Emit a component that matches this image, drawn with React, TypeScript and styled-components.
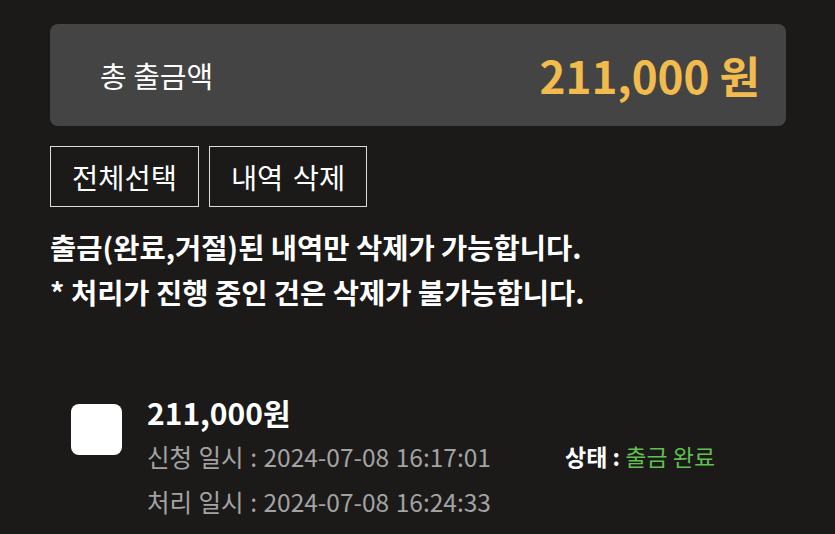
import React from "react";
import styled, { createGlobalStyle } from "styled-components";

const GlobalStyle = createGlobalStyle`
  html, body {
    margin: 0;
    padding: 0;
    background: #1b1a19;
  }
  body {
    font-family: "Noto Sans CJK KR", "Noto Sans", sans-serif;
    color: #ffffff;
  }
  * {
    box-sizing: border-box;
  }
`;

const Page = styled("div")`
  width: 835px;
  height: 534px;
  overflow: hidden;
  padding: 24px 49px 0 50px;
`;

const SummaryBox = styled("div")`
  height: 102px;
  border-radius: 8px;
  background: #444444;
  display: flex;
  align-items: center;
  justify-content: space-between;
  padding: 0 26px 0 50px;
`;

const SummaryLabel = styled("span")`
  font-size: 29px;
  font-weight: 400;
  line-height: 1;
`;

const SummaryAmount = styled("span")`
  font-size: 44px;
  font-weight: 700;
  color: #f2bb4d;
  line-height: 1;
`;

const ButtonRow = styled("div")`
  display: flex;
  gap: 10px;
  margin-top: 20px;
`;

const OutlineButton = styled("button")`
  height: 61px;
  padding: 0 21px;
  background: transparent;
  border: 1.5px solid #dcdcdc;
  border-radius: 0;
  color: #ffffff;
  font-family: inherit;
  font-size: 28.5px;
  font-weight: 400;
  word-spacing: 3px;
  cursor: pointer;
`;

const Notice = styled("p")`
  margin: 17px 0 0;
  font-size: 28.5px;
  font-weight: 700;
  line-height: 45px;
`;

const ItemList = styled("div")`
  margin-top: 76px;
`;

const Item = styled("div")`
  display: flex;
  align-items: flex-start;
  gap: 25px;
  padding-left: 21px;
`;

const CheckBox = styled("div")`
  width: 51px;
  height: 51px;
  margin-top: 14px;
  border-radius: 8px;
  background: #ffffff;
  flex-shrink: 0;
`;

const ItemBody = styled("div")`
  display: grid;
  grid-template-columns: 418px auto;
`;

const ItemAmount = styled("div")`
  grid-column: 1 / span 2;
  font-size: 30px;
  font-weight: 700;
  line-height: 44px;
`;

const Detail = styled("div")`
  font-size: 24.5px;
  color: #a3a3a3;
  line-height: 45px;
  word-spacing: 1px;
`;

const Status = styled("div")`
  font-size: 23px;
  line-height: 45px;
  color: #5fbf4f;

  & > b {
    color: #ffffff;
    font-weight: 700;
  }
`;

type Withdrawal = {
  amount: string;
  requested: string;
  processed: string;
  status: string;
};

const items: Withdrawal[] = [
  {
    amount: "211,000원",
    requested: "2024-07-08 16:17:01",
    processed: "2024-07-08 16:24:33",
    status: "출금 완료",
  },
];

export default function App() {
  return (
    <>
      <GlobalStyle />
      <Page>
        <SummaryBox>
          <SummaryLabel>총 출금액</SummaryLabel>
          <SummaryAmount>211,000 원</SummaryAmount>
        </SummaryBox>
        <ButtonRow>
          <OutlineButton>전체선택</OutlineButton>
          <OutlineButton>내역 삭제</OutlineButton>
        </ButtonRow>
        <Notice>
          출금(완료,거절)된 내역만 삭제가 가능합니다.
          <br />* 처리가 진행 중인 건은 삭제가 불가능합니다.
        </Notice>
        <ItemList>
          {items.map((it, i) => (
            <Item key={i}>
              <CheckBox />
              <ItemBody>
                <ItemAmount>{it.amount}</ItemAmount>
                <Detail>신청 일시 : {it.requested}</Detail>
                <Status>
                  <b>상태 : </b>
                  {it.status}
                </Status>
                <Detail>처리 일시 : {it.processed}</Detail>
              </ItemBody>
            </Item>
          ))}
        </ItemList>
      </Page>
    </>
  );
}
